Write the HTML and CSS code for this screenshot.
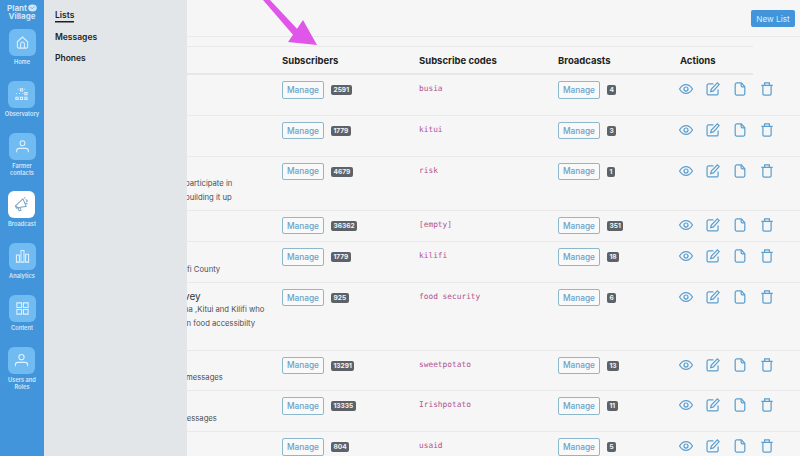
FILE: index.html
```html
<!DOCTYPE html>
<html lang="en">
<head>
<meta charset="utf-8">
<title>Lists</title>
<link rel="stylesheet" href="styles.css">
</head>
<body>
<div class="app">
  <nav class="rail">
    <div class="logo"><span>Plant<svg class="logo-leaf" viewBox="0 0 10 8"><ellipse cx="5" cy="4" rx="4.800" ry="3.800"/><path class="logo-vein" d="M2.500 3.500 Q5 6 7.500 2.500"/></svg></span><span>Village</span></div>
    <a class="rail-item"><span class="rail-icon"><svg viewBox="0 0 16 16"><path d="M2.500 7.200 8 2.200l5.500 5v5.300a1.500 1.500 0 0 1-1.500 1.500H4a1.500 1.500 0 0 1-1.500-1.500zM6 14V9.500a2 2 0 0 1 4 0V14"/></svg></span><span class="rail-label">Home</span></a>
    <a class="rail-item"><span class="rail-icon"><svg viewBox="0 0 16 16"><path d="M4 2.500h1M6.800 1.800h2.400v2.400H6.800zM11 2.500h1M2 7h1M5.500 7h1M9 7h1M11.500 5.800h2.400v2.400h-2.400zM2 11h2.400v2.400H2zM6.800 11h2.400v2.400H6.800zM11.500 11h2.400v2.400h-2.400z"/></svg></span><span class="rail-label">Observatory</span></a>
    <a class="rail-item"><span class="rail-icon"><svg viewBox="0 0 16 16"><circle cx="8" cy="4.500" r="2.600"/><path d="M1.800 14v-1.500c0-1.500 1-2.500 2.500-2.500h7.400c1.500 0 2.500 1 2.500 2.500V14"/></svg></span><span class="rail-label">Farmer<br>contacts</span></a>
    <a class="rail-item is-active"><span class="rail-icon"><svg viewBox="0 0 16 16"><path d="M1.500 9.500 9.500 2l3.500 8-8.500 1.500zM1.500 9.500l1 2.500 2-.5M4 11.500l1.500 3.300 2-.8L6.200 11M11 1.500l1-1M13 5l1.500-.8M12.500 2.500l2 1.800M12 6.500l2.500 1"/></svg></span><span class="rail-label">Broadcast</span></a>
    <a class="rail-item"><span class="rail-icon"><svg viewBox="0 0 16 16"><path d="M1.500 6.500h3.200V14H1.500zM6.400 1.500h3.200V14H6.400zM11.300 5.500h3.200V14h-3.200z"/></svg></span><span class="rail-label">Analytics</span></a>
    <a class="rail-item"><span class="rail-icon"><svg viewBox="0 0 16 16"><path d="M2 2h5v5H2zM9 2h5v5H9zM2 9h5v5H2zM9 9h5v5H9z"/></svg></span><span class="rail-label">Content</span></a>
    <a class="rail-item"><span class="rail-icon"><svg viewBox="0 0 16 16"><circle cx="8" cy="4.500" r="2.800"/><path d="M1.500 14v-1.500C1.500 11 2.500 10 4 10h8c1.500 0 2.500 1 2.500 2.500V14"/></svg></span><span class="rail-label">Users and<br>Roles</span></a>
  </nav>
  <aside class="panel">
    <a class="panel-link is-current">Lists</a>
    <a class="panel-link">Messages</a>
    <a class="panel-link">Phones</a>
  </aside>
  <main class="main">
    <header class="topbar"><button class="new-list">New List</button></header>
    <section class="table">
      <div class="row head">
        <div class="cell"></div>
        <div class="cell">Subscribers</div>
        <div class="cell">Subscribe codes</div>
        <div class="cell">Broadcasts</div>
        <div class="cell">Actions</div>
      </div>

      <div class="row">
        <div class="name"><div class="line"></div><div class="line"></div></div>
        <div class="cell"><button class="manage">Manage</button><span class="badge">2591</span></div>
        <code class="code">busia</code>
        <div class="cell"><button class="manage">Manage</button><span class="badge">4</span></div>
        <div class="actions"><svg class="act" viewBox="0 0 16 16"><use href="#eye"/></svg><svg class="act" viewBox="0 0 16 16"><use href="#edit"/></svg><svg class="act" viewBox="0 0 16 16"><use href="#file"/></svg><svg class="act" viewBox="0 0 16 16"><use href="#trash"/></svg></div>
      </div>

      <div class="row">
        <div class="name"><div class="line"></div><div class="line"></div></div>
        <div class="cell"><button class="manage">Manage</button><span class="badge">1779</span></div>
        <code class="code">kitui</code>
        <div class="cell"><button class="manage">Manage</button><span class="badge">3</span></div>
        <div class="actions"><svg class="act" viewBox="0 0 16 16"><use href="#eye"/></svg><svg class="act" viewBox="0 0 16 16"><use href="#edit"/></svg><svg class="act" viewBox="0 0 16 16"><use href="#file"/></svg><svg class="act" viewBox="0 0 16 16"><use href="#trash"/></svg></div>
      </div>

      <div class="row">
        <div class="name"><div class="line"></div><div class="line cut-2">participate in</div><div class="line cut-2">building it up</div></div>
        <div class="cell"><button class="manage">Manage</button><span class="badge">4679</span></div>
        <code class="code">risk</code>
        <div class="cell"><button class="manage">Manage</button><span class="badge">1</span></div>
        <div class="actions"><svg class="act" viewBox="0 0 16 16"><use href="#eye"/></svg><svg class="act" viewBox="0 0 16 16"><use href="#edit"/></svg><svg class="act" viewBox="0 0 16 16"><use href="#file"/></svg><svg class="act" viewBox="0 0 16 16"><use href="#trash"/></svg></div>
      </div>

      <div class="row">
        <div class="name"><div class="line"></div></div>
        <div class="cell"><button class="manage">Manage</button><span class="badge">36362</span></div>
        <code class="code">[empty]</code>
        <div class="cell"><button class="manage">Manage</button><span class="badge">351</span></div>
        <div class="actions"><svg class="act" viewBox="0 0 16 16"><use href="#eye"/></svg><svg class="act" viewBox="0 0 16 16"><use href="#edit"/></svg><svg class="act" viewBox="0 0 16 16"><use href="#file"/></svg><svg class="act" viewBox="0 0 16 16"><use href="#trash"/></svg></div>
      </div>

      <div class="row">
        <div class="name"><div class="line"></div><div class="line">fi County</div></div>
        <div class="cell"><button class="manage">Manage</button><span class="badge">1779</span></div>
        <code class="code">kilifi</code>
        <div class="cell"><button class="manage">Manage</button><span class="badge">18</span></div>
        <div class="actions"><svg class="act" viewBox="0 0 16 16"><use href="#eye"/></svg><svg class="act" viewBox="0 0 16 16"><use href="#edit"/></svg><svg class="act" viewBox="0 0 16 16"><use href="#file"/></svg><svg class="act" viewBox="0 0 16 16"><use href="#trash"/></svg></div>
      </div>

      <div class="row">
        <div class="name"><div class="line title cut-3">vey</div><div class="line cut-3">na ,Kitui and Kilifi who</div><div class="line cut-5">on food accessibilty</div><div class="line"></div></div>
        <div class="cell"><button class="manage">Manage</button><span class="badge">925</span></div>
        <code class="code">food security</code>
        <div class="cell"><button class="manage">Manage</button><span class="badge">6</span></div>
        <div class="actions"><svg class="act" viewBox="0 0 16 16"><use href="#eye"/></svg><svg class="act" viewBox="0 0 16 16"><use href="#edit"/></svg><svg class="act" viewBox="0 0 16 16"><use href="#file"/></svg><svg class="act" viewBox="0 0 16 16"><use href="#trash"/></svg></div>
      </div>

      <div class="row">
        <div class="name"><div class="line"></div><div class="line cut-1">messages</div></div>
        <div class="cell"><button class="manage">Manage</button><span class="badge">13291</span></div>
        <code class="code">sweetpotato</code>
        <div class="cell"><button class="manage">Manage</button><span class="badge">13</span></div>
        <div class="actions"><svg class="act" viewBox="0 0 16 16"><use href="#eye"/></svg><svg class="act" viewBox="0 0 16 16"><use href="#edit"/></svg><svg class="act" viewBox="0 0 16 16"><use href="#file"/></svg><svg class="act" viewBox="0 0 16 16"><use href="#trash"/></svg></div>
      </div>

      <div class="row">
        <div class="name"><div class="line"></div><div class="line cut-7">messages</div></div>
        <div class="cell"><button class="manage">Manage</button><span class="badge">13335</span></div>
        <code class="code">Irishpotato</code>
        <div class="cell"><button class="manage">Manage</button><span class="badge">11</span></div>
        <div class="actions"><svg class="act" viewBox="0 0 16 16"><use href="#eye"/></svg><svg class="act" viewBox="0 0 16 16"><use href="#edit"/></svg><svg class="act" viewBox="0 0 16 16"><use href="#file"/></svg><svg class="act" viewBox="0 0 16 16"><use href="#trash"/></svg></div>
      </div>

      <div class="row">
        <div class="name"><div class="line"></div><div class="line"></div></div>
        <div class="cell"><button class="manage">Manage</button><span class="badge">804</span></div>
        <code class="code">usaid</code>
        <div class="cell"><button class="manage">Manage</button><span class="badge">5</span></div>
        <div class="actions"><svg class="act" viewBox="0 0 16 16"><use href="#eye"/></svg><svg class="act" viewBox="0 0 16 16"><use href="#edit"/></svg><svg class="act" viewBox="0 0 16 16"><use href="#file"/></svg><svg class="act" viewBox="0 0 16 16"><use href="#trash"/></svg></div>
      </div>
    </section>
  </main>
  <svg class="arrow" viewBox="0 0 60 50"><path d="M0 0H7L34 28.800 40 20 54 45 25 42 30 34.700Z"/></svg>
</div>
<svg class="defs" width="0" height="0">
  <defs>
    <g id="eye"><path d="M.6 8S3.500 3 8 3s7.400 5 7.400 5-2.900 5-7.400 5S.6 8 .6 8z"/><circle cx="8" cy="8" r="2.300"/></g>
    <g id="edit"><path d="M13.800 8.500v4.500a1.800 1.800 0 0 1-1.800 1.800H3A1.800 1.800 0 0 1 1.200 13V4A1.800 1.800 0 0 1 3 2.200h5.500"/><path d="M13 1l2 2-6.500 7.200-3.200.9.800-3.100z"/></g>
    <g id="file"><path d="M9.500 1H4.300A1.800 1.800 0 0 0 2.500 2.800v10.400A1.800 1.800 0 0 0 4.300 15h7.400a1.800 1.800 0 0 0 1.800-1.800V5.500z"/><path d="M9.300 1.200v2.800a1.500 1.500 0 0 0 1.500 1.500h2.700"/></g>
    <g id="trash"><path d="M1.500 3.800h13M5.300 3.800V1h5.400v2.800M3.300 3.800v9.700a1.500 1.500 0 0 0 1.500 1.500h6.400a1.500 1.500 0 0 0 1.500-1.500V3.800"/></g>
  </defs>
</svg>
</body>
</html>
```

FILE: styles.css
```css
* { box-sizing: border-box; }
html, body { margin: 0; height: 100%; overflow: hidden; }
body { background: #f6f6f6; color: #1c1f23; font-family: Inter, "Open Sans", sans-serif; }

.app { position: relative; display: flex; width: 800px; height: 456px; overflow: hidden; }
.defs { position: absolute; }

/* Icon rail */
.rail { flex: 0 0 44px; background: #4295db; display: flex; flex-direction: column; align-items: center; color: #d4e9f9; }
.logo { display: flex; flex-direction: column; align-items: center; height: 29px; padding-top: 5px; font-size: 8px; line-height: 7.500px; font-weight: 700; color: #cfe6f8; }
.logo span { display: flex; align-items: center; }
.logo-leaf { width: 9px; height: 8px; fill: #cfe6f8; margin: -2px 0 0 1px; }
.logo-vein { fill: none; stroke: #4295db; stroke-width: .7; }
.rail-item { display: flex; flex-direction: column; align-items: center; height: 52px; }
.rail-item:nth-of-type(3) { height: 58px; }
.rail-icon { width: 27px; height: 27px; border-radius: 6px; background: #70bbf1; display: flex; align-items: center; justify-content: center; margin-bottom: 2px; }
.rail-icon svg { width: 15px; height: 15px; fill: none; stroke: #e2f2fd; stroke-width: 1.100; }
.is-active .rail-icon { background: #fff; }
.is-active .rail-icon svg { stroke: #7ba6c6; }
.rail-label { font-size: 5.700px; line-height: 7px; font-weight: 600; text-align: center; white-space: nowrap; }

/* Secondary panel */
.panel { flex: 0 0 143px; background: #e3e6e9; display: flex; flex-direction: column; align-items: flex-start; gap: 9.500px; padding: 9px 0 0 11px; }
.panel-link { font-size: 8.500px; line-height: 12px; font-weight: 600; color: #1c1f23; }
.is-current { box-shadow: 0 1.500px 0 #1c1f23; }

/* Main */
.main { flex: 1; min-width: 0; overflow: hidden; }
.topbar { display: flex; justify-content: flex-end; height: 37px; padding: 10px 5px 0 0; border-bottom: 1px solid #e9e9e9; }
.new-list { width: 44px; height: 17px; padding: 0; border: 0; border-radius: 2px; background: #4295db; color: #d9edfb; font: 400 8.200px Inter, sans-serif; }

.table { padding-top: 9px; }
.row { display: grid; grid-template-columns: 95px 137px 139px 122px 120px; border-bottom: 1px solid #e9e9e9; padding-top: 6px; padding-bottom: 6.750px; }
.head { width: 566px; height: 29px; padding: 0; align-items: center; border-top: 1px solid #e9e9e9; border-bottom: 2px solid #e7e7e7; font-size: 9.500px; font-weight: 700; color: #1c1f23; }
.cell { display: flex; align-items: flex-start; }
.name { overflow: hidden; min-width: 0; margin: 1px 0 -1px; }
.line { height: 13.500px; line-height: 13.500px; font-size: 7.700px; color: #4b4f54; white-space: nowrap; }
.title { font-size: 10px; color: #33373b; }
.cut-1 { margin-left: -1px; }
.cut-2 { margin-left: -2px; }
.cut-3 { margin-left: -3px; }
.cut-5 { margin-left: -5px; }
.cut-7 { margin-left: -7px; }

.manage { width: 42px; height: 17.500px; padding: 0; background: #f9f9f9; border: 1px solid #8db8cc; border-radius: 2px; color: #6aa3ca; font: 500 8.300px Inter, sans-serif; }
.badge { margin: 4px 0 0 7px; padding: 0 2.500px; height: 10px; line-height: 10px; border-radius: 2px; background: #5d6268; color: #f4f4f4; font-size: 6.600px; font-weight: 700; }
.code { padding-top: 1px; font-family: "DejaVu Sans Mono", monospace; font-size: 7.840px; line-height: 13px; color: #b3528f; }
.actions { display: flex; gap: 13px; margin-left: -1px; }
.act { width: 14px; height: 14px; margin-top: 1px; fill: none; stroke: #5a9fd0; stroke-width: 1.400; }

.arrow { position: absolute; left: 263px; top: 0; width: 60px; height: 50px; fill: #df56e8; }
```
